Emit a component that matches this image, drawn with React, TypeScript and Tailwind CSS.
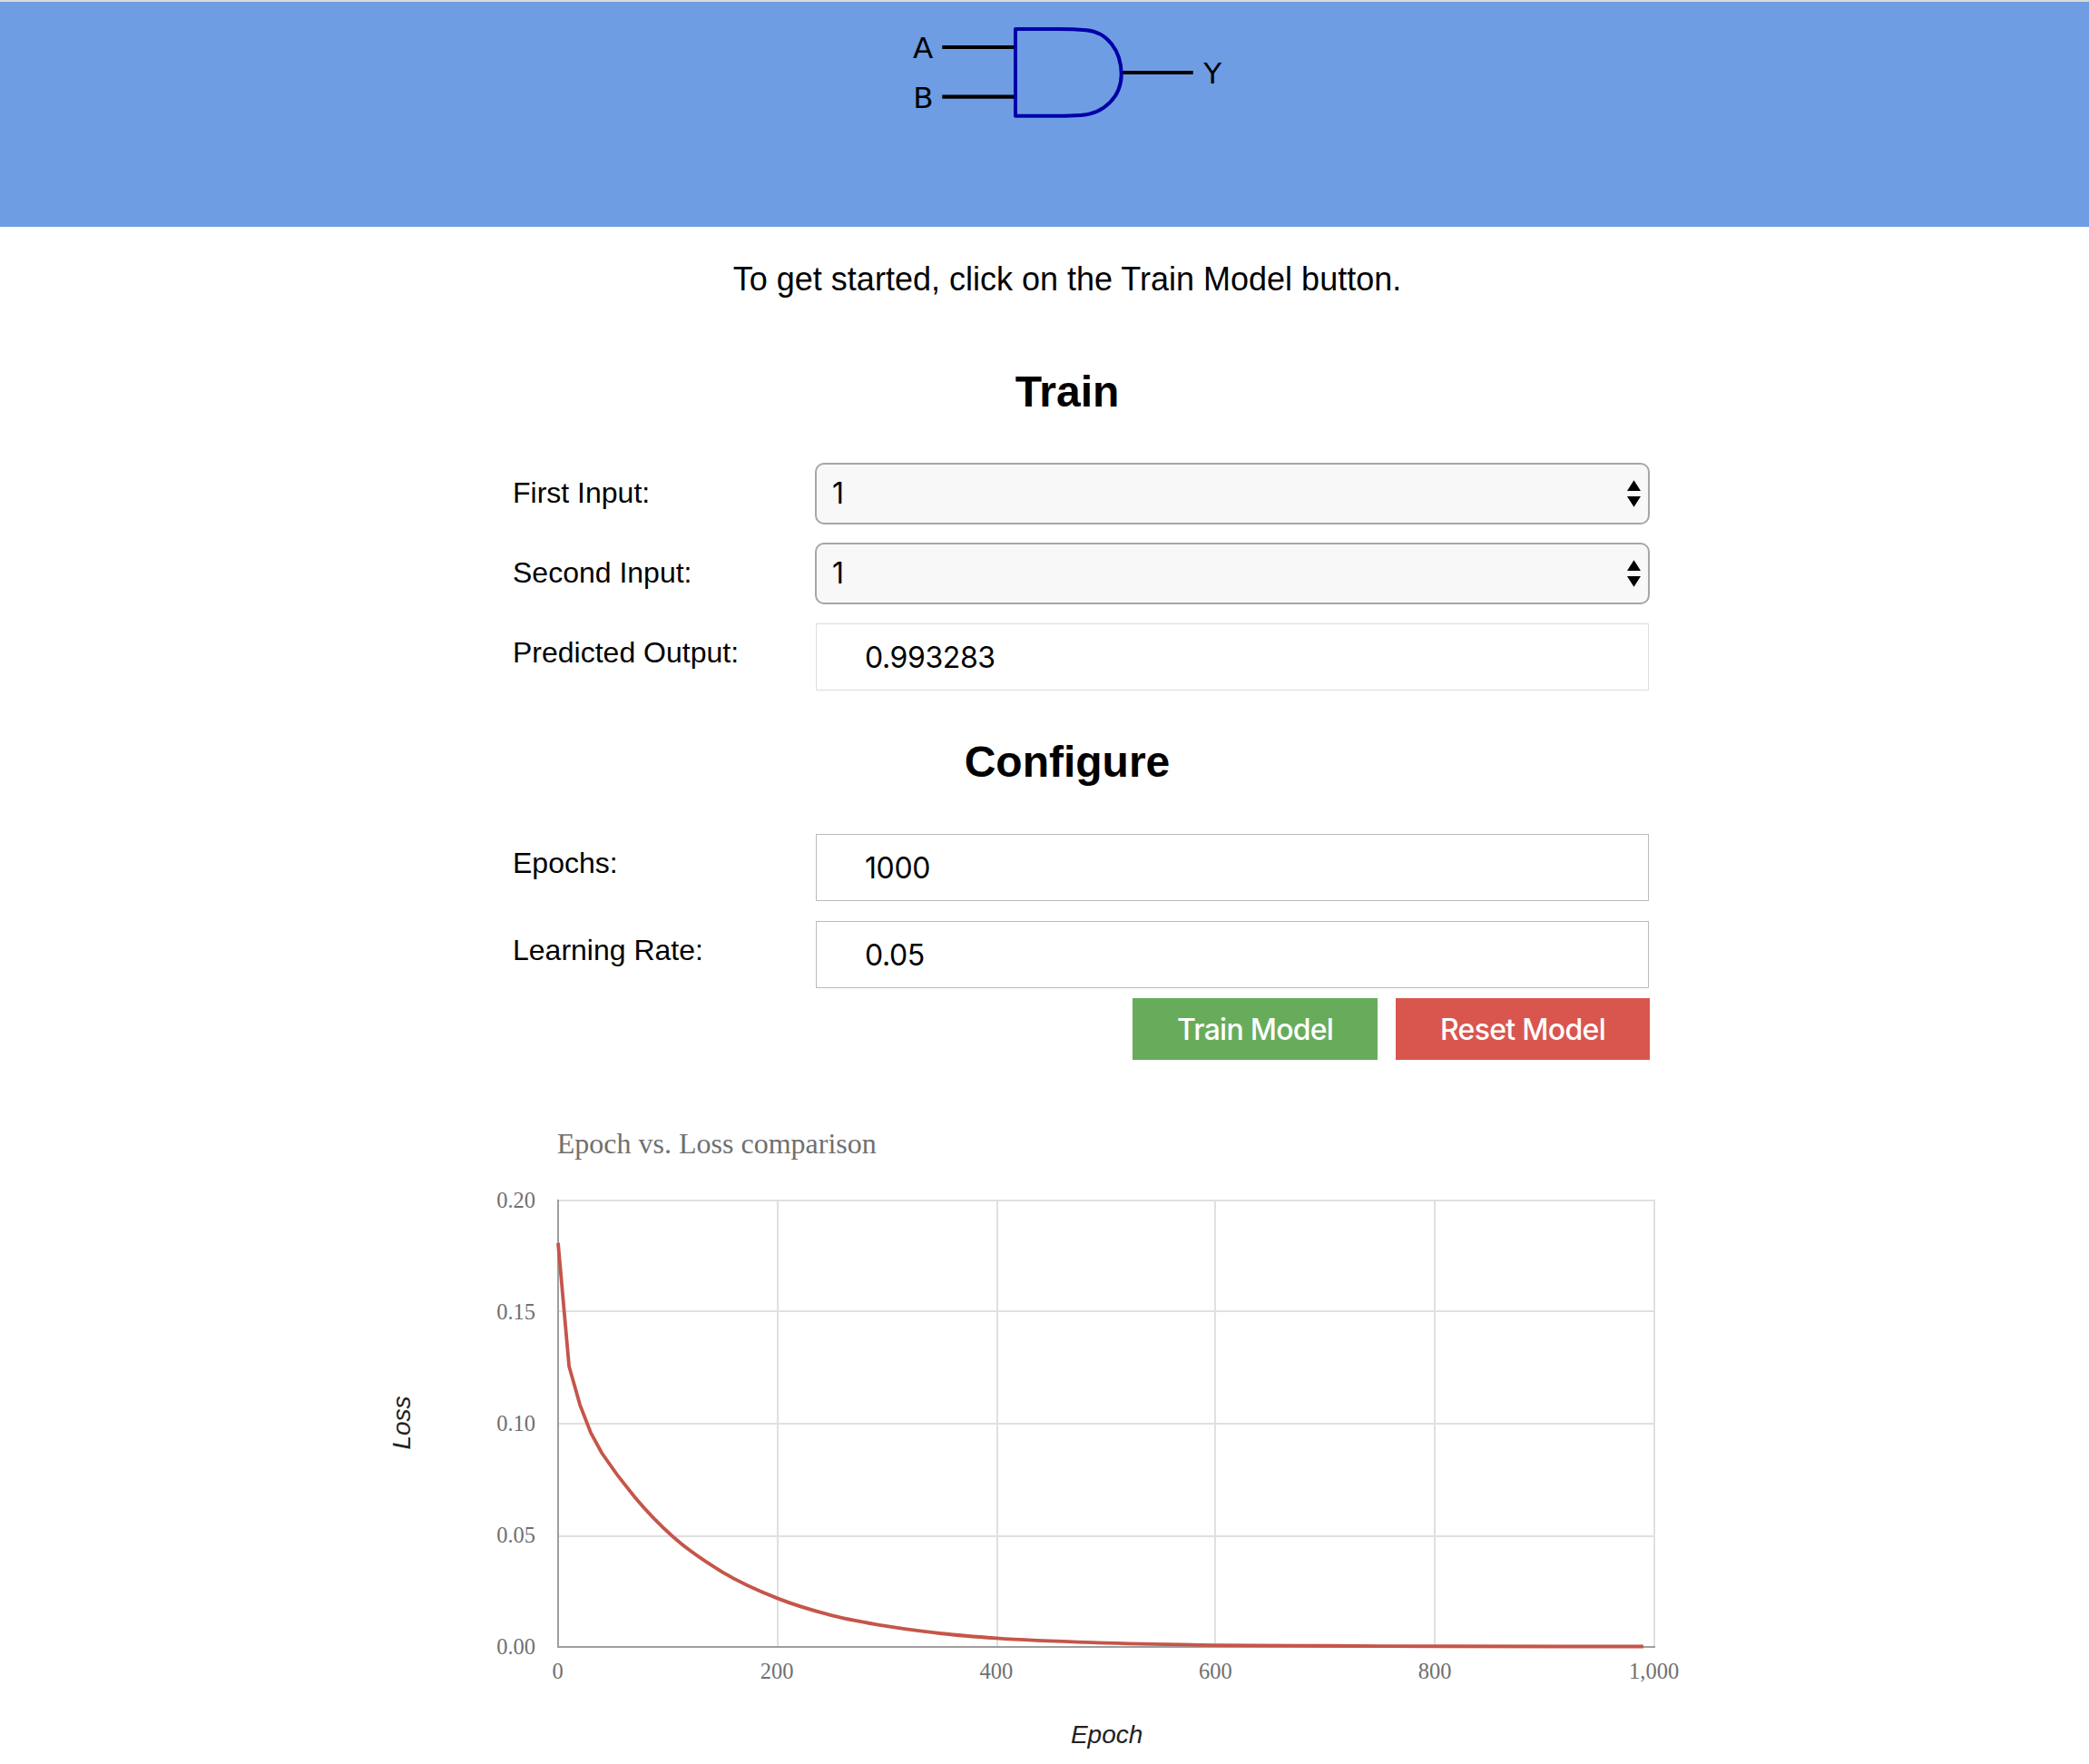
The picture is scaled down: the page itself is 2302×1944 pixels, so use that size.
import type { ReactNode } from "react";

const sans = "font-['Liberation_Sans',Arial,sans-serif]";
const ui = "font-['Inter',sans-serif]";

function GateDiagram() {
  return (
    <svg width="360" height="120" viewBox="996 18 360 120" className="block" fill="none">
      <g stroke="#000" strokeWidth="4.2">
        <path d="M1038.3 52H1119M1038.3 106.7H1119M1236 80H1314.7" />
      </g>
      <path
        d="M1119 32H1166C1182 32 1190 32.6 1197 33.2C1220 35 1235.7 56 1235.7 82C1235.7 106 1217 125.5 1191 127C1183 127.6 1176 127.8 1166 127.8H1119Z"
        stroke="#0000a8"
        strokeWidth="4"
        strokeLinejoin="round"
      />
      <g fill="#000" fontFamily="DejaVu Sans, sans-serif" fontSize="32.5">
        <text x="1006" y="63.7">A</text>
        <text x="1006.3" y="118.7">B</text>
        <text x="1326.3" y="91.7">Y</text>
      </g>
    </svg>
  );
}

function Row({ label, children }: { label: string; children: ReactNode }) {
  return (
    <div className="flex items-start pl-[30px]">
      <div className="mt-[15px] w-[334px] pl-px text-[32px] leading-[36px]">{label}</div>
      <div className="flex-1">{children}</div>
    </div>
  );
}

function Select({ value }: { value: string }) {
  return (
    <div
      className={`${ui} flex h-[68px] items-center justify-between rounded-[10px] border-2 border-[#a6a6a6] bg-[#f8f8f8] pr-2 pl-[17px] text-[32px]`}
    >
      <span className="mb-px leading-[40px]">{value}</span>
      <svg width="15" height="30" viewBox="0 0 15 30" className="block" fill="#000">
        <path d="M7.5 0.3L15 12H0zM7.5 29.7L15 18H0z" />
      </svg>
    </div>
  );
}

function Field({ value, border }: { value: string; border: string }) {
  return (
    <div
      className={`${ui} m-px flex h-[74px] items-center border pt-[2px] pl-[53px] text-[32px] leading-[40px] tracking-[-0.4px] ${border}`}
    >
      {value}
    </div>
  );
}

const X0 = 615;
const Y0 = 1815;
const px = (e: number) => X0 + e * 1.208;
const py = (l: number) => Y0 - l * 2460;

const early: [number, number][] = [
  [0, 0.181],
  [10, 0.1257],
  [20, 0.1084],
  [30, 0.0958],
  [40, 0.0868],
];
const late: [number, number][] = [
  [40, 0.0868],
  [70, 0.0671],
  [105, 0.0493],
  [150, 0.0335],
  [200, 0.0218],
  [250, 0.0141],
  [300, 0.0093],
  [350, 0.006],
  [400, 0.0039],
  [500, 0.0018],
  [600, 0.0008],
  [700, 0.0005],
  [800, 0.0003],
  [990, 0.0002],
];

function curvePath() {
  let d = early.map(([e, l], i) => `${i ? "L" : "M"}${px(e)} ${py(l)}`).join("");
  const p = late.map(([e, l]) => [px(e), py(l)]);
  const last = p.length - 1;
  const chord = (i: number) => (p[i + 1][1] - p[i][1]) / (p[i + 1][0] - p[i][0]);
  const slope = p.map((_, i) => {
    if (i === 0) return chord(0) * 1.12;
    if (i === last) return 0;
    const h0 = p[i][0] - p[i - 1][0];
    const h1 = p[i + 1][0] - p[i][0];
    return (chord(i - 1) * h1 + chord(i) * h0) / (h0 + h1);
  });
  for (let i = 1; i <= last; i++) {
    const h = (p[i][0] - p[i - 1][0]) / 3;
    d += `C${p[i - 1][0] + h} ${p[i - 1][1] + slope[i - 1] * h} ${p[i][0] - h} ${p[i][1] - slope[i] * h} ${p[i][0]} ${p[i][1]}`;
  }
  return d;
}

const xTicks: [number, string][] = [
  [615, "0"],
  [857, "200"],
  [1099, "400"],
  [1339, "600"],
  [1581, "800"],
  [1823, "1,000"],
];
const yTicks: [number, string][] = [
  [1323, "0.20"],
  [1445, "0.15"],
  [1569, "0.10"],
  [1693, "0.05"],
  [1815, "0.00"],
];

function LossChart() {
  return (
    <svg width="1480" height="724" viewBox="400 1220 1480 724" className="ml-[400px] block">
      <g stroke="#e0e0e0" strokeWidth="2">
        {xTicks.map(([x]) => (
          <path key={x} d={`M${x} 1322V1816`} />
        ))}
        {yTicks.map(([y]) => (
          <path key={y} d={`M614 ${y}H1824`} />
        ))}
      </g>
      <path d="M615 1322V1816M614 1815H1824" stroke="#9e9e9e" strokeWidth="2" />
      <path d={curvePath()} fill="none" stroke="#c5554a" strokeWidth="3.8" />
      <g fontFamily="Liberation Serif, serif" fill="#707070">
        <text x="613.8" y="1271" fontSize="32" textLength="352">
          Epoch vs. Loss comparison
        </text>
        <g fontSize="24.5" textAnchor="end">
          {yTicks.map(([, t], i) => (
            <text key={t} x="590" y={1331 + i * 123}>
              {t}
            </text>
          ))}
        </g>
        <g fontSize="24.5" textAnchor="middle">
          {xTicks.map(([, t], i) => (
            <text key={t} x={614.6 + i * 241.6} y="1850">
              {t}
            </text>
          ))}
        </g>
      </g>
      <g fontFamily="Liberation Sans, sans-serif" fontStyle="italic" fontSize="28" textAnchor="middle" fill="#222">
        <text x="1219.6" y="1920.5">
          Epoch
        </text>
        <text transform="translate(452 1568) rotate(-90)">Loss</text>
      </g>
    </svg>
  );
}

export default function App() {
  return (
    <div className={`${sans} h-[1944px] w-[2302px] overflow-hidden bg-white text-black`}>
      <header className="flex h-[250px] items-start border-t-2 border-[#dadada] bg-[#6e9de4] pt-4 pl-[996px]">
        <GateDiagram />
      </header>
      <main className="ml-[534px] flex w-[1284px] flex-col">
        <p className="mt-[38px] text-center text-[36px] leading-[40px]">
          To get started, click on the Train Model button.
        </p>
        <h2 className="mt-[76px] text-center text-[48px] leading-[56px] font-bold">Train</h2>
        <section className="mt-[50px] flex flex-col gap-5">
          <Row label="First Input:">
            <Select value="1" />
          </Row>
          <Row label="Second Input:">
            <Select value="1" />
          </Row>
          <Row label="Predicted Output:">
            <Field value="0.993283" border="border-[#dddddd]" />
          </Row>
        </section>
        <h2 className="mt-[50px] text-center text-[48px] leading-[56px] font-bold">Configure</h2>
        <section className="mt-[50px] flex flex-col gap-5">
          <Row label="Epochs:">
            <Field value="1000" border="border-[#bbbbbb]" />
          </Row>
          <Row label="Learning Rate:">
            <Field value="0.05" border="border-[#bbbbbb]" />
          </Row>
        </section>
        <div className={`${ui} mt-[10px] flex justify-end gap-5 text-[32px] text-white`}>
          <button className="h-[68px] w-[270px] bg-[#67ac5b] pt-[2px] font-[450] tracking-[-0.75px]">
            Train Model
          </button>
          <button className="h-[68px] w-[280px] bg-[#d9564f] pt-[2px] font-[450] tracking-[-0.7px]">
            Reset Model
          </button>
        </div>
      </main>
      <div className="mt-[52px]">
        <LossChart />
      </div>
    </div>
  );
}
